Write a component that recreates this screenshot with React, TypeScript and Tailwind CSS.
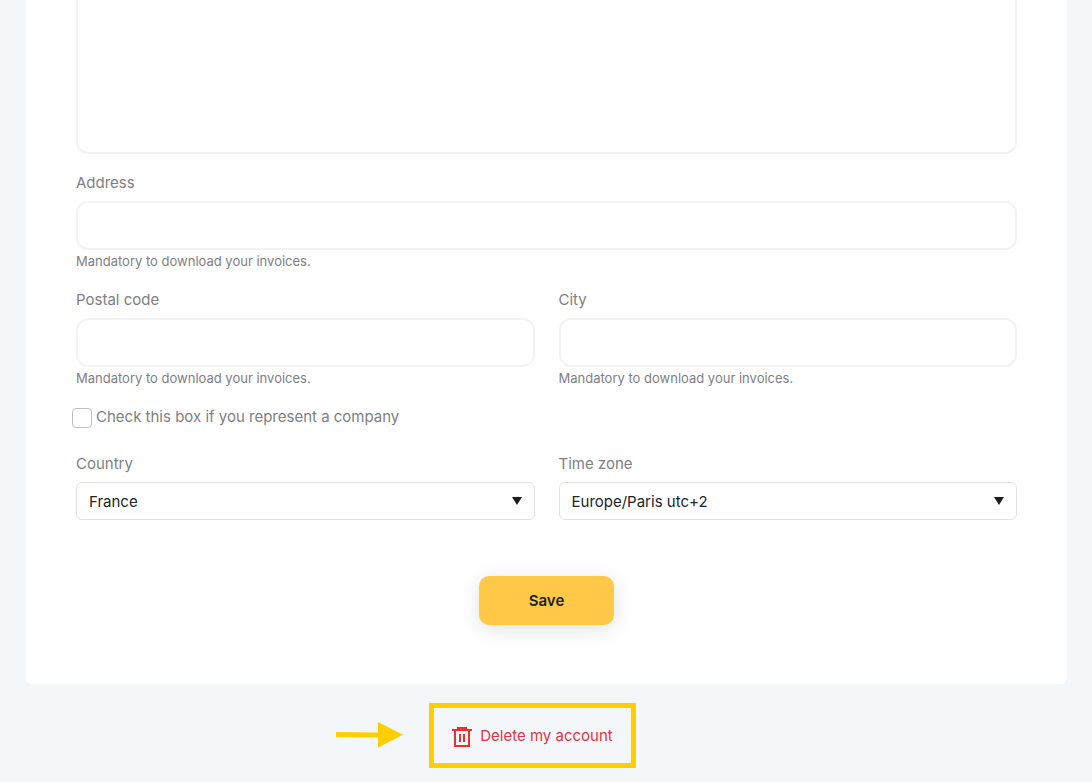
import React, { useState } from "react";

interface TextFieldProps {
  id: string;
  label: string;
  hint: string;
}

interface SelectFieldProps {
  id: string;
  label: string;
  options: string[];
}

const TextField: React.FC<TextFieldProps> = ({ id, label, hint }) => {
  const [value, setValue] = useState("");

  return (
    <div className="flex flex-col">
      <label htmlFor={id} className="mb-1.5 text-[15px] leading-6">{label}</label>
      <input
        id={id}
        type="text"
        value={value}
        onChange={(e) => setValue(e.target.value)}
        aria-describedby={`${id}-hint`}
        className="h-[49px] w-full rounded-xl border-2 border-[#f3f3f3] bg-white px-3 text-[#1d1d1b] outline-none focus:border-[#ffc846]"
      />
      <p id={`${id}-hint`} className="text-[13px] leading-[22px]">{hint}</p>
    </div>
  );
};

const SelectField: React.FC<SelectFieldProps> = ({ id, label, options }) => (
  <div className="flex flex-col">
    <label htmlFor={id} className="mb-1.5 text-[15px] leading-6">{label}</label>
    <div className="relative">
      <select
        id={id}
        className="h-[38px] w-full appearance-none rounded-md border border-[#dee2e6] bg-white px-3 pt-0.5 text-[15px] text-[#212529] outline-none"
      >
        {options.map((option) => (
          <option key={option}>{option}</option>
        ))}
      </select>
      <svg
        viewBox="0 0 10 8"
        className="pointer-events-none absolute top-[15px] right-[13px] h-2 w-2.5"
        fill="#1d1d1b"
        aria-hidden="true"
      >
        <path d="M0 0h10L5 8z" />
      </svg>
    </div>
  </div>
);

const TrashIcon = () => (
  <svg viewBox="0 0 20 20" className="h-5 w-5 shrink-0" fill="#e9322d" aria-hidden="true">
    <path d="M5 0h10v2h5v2h-2v16H2V4H0V2h5zM4 4v14h12V4z" fillRule="evenodd" />
    <path d="M7 7h2v8H7zM11 7h2v8h-2z" />
  </svg>
);

const Arrow = () => (
  <svg viewBox="0 0 67 28" className="h-7 w-[67px] shrink-0" fill="#ffce00" aria-hidden="true">
    <path d="M0 10l42 .5V0l25 12.8L42 25.5v-10L0 15z" />
  </svg>
);

export default function App() {
  const [isCompany, setIsCompany] = useState(false);

  return (
    <div className="min-h-screen bg-[#f3f7fa] font-['Inter',sans-serif] font-normal text-[#808083]">
      <main className="mr-[25px] ml-[26px] rounded-b-md bg-white px-[50px] pb-[59px]">
        <form onSubmit={(e) => e.preventDefault()}>
          <textarea
            aria-label="Description"
            className="block h-[154px] w-full resize-none rounded-b-xl border-2 border-t-0 border-[#f3f3f3] bg-white p-3 text-[#1d1d1b] outline-none"
          />

          <div className="mt-[17px] flex flex-col gap-4">
            <TextField id="address" label="Address" hint="Mandatory to download your invoices." />
            <div className="grid grid-cols-2 gap-6">
              <TextField id="postal-code" label="Postal code" hint="Mandatory to download your invoices." />
              <TextField id="city" label="City" hint="Mandatory to download your invoices." />
            </div>
          </div>

          <div className="mt-4 -ml-1 flex items-center gap-1">
            <input
              id="company"
              type="checkbox"
              checked={isCompany}
              onChange={(e) => setIsCompany(e.target.checked)}
              className="mt-0.5 h-5 w-5 appearance-none rounded border border-[#bfbfbf] bg-white checked:bg-[#ffc846]"
            />
            <label htmlFor="company" className="text-[15px] leading-6">
              Check this box if you represent a company
            </label>
          </div>

          <div className="mt-[23px] grid grid-cols-2 gap-6">
            <SelectField id="country" label="Country" options={["France", "Belgium", "Germany", "Spain"]} />
            <SelectField id="timezone" label="Time zone" options={["Europe/Paris utc+2", "Europe/London utc+1"]} />
          </div>

          <div className="mt-14 flex justify-center">
            <button
              type="submit"
              className="h-[49px] w-[135px] rounded-[10px] bg-[#ffc846] pt-0.5 text-[15px] font-semibold text-[#1d1d1b] shadow-[0_4px_20px_rgba(0,0,0,0.12)]"
            >
              Save
            </button>
          </div>
        </form>
      </main>

      <div className="flex items-center justify-center gap-[26px] pt-[19px] pr-[120px] pb-3.5">
        <Arrow />
        <a
          href="#delete"
          className="flex h-[65px] items-center gap-2 border-5 border-[#ffce00] px-[18px] pt-0.5 text-[15px] text-[#dc3545]"
        >
          <TrashIcon />
          Delete my account
        </a>
      </div>
    </div>
  );
}
